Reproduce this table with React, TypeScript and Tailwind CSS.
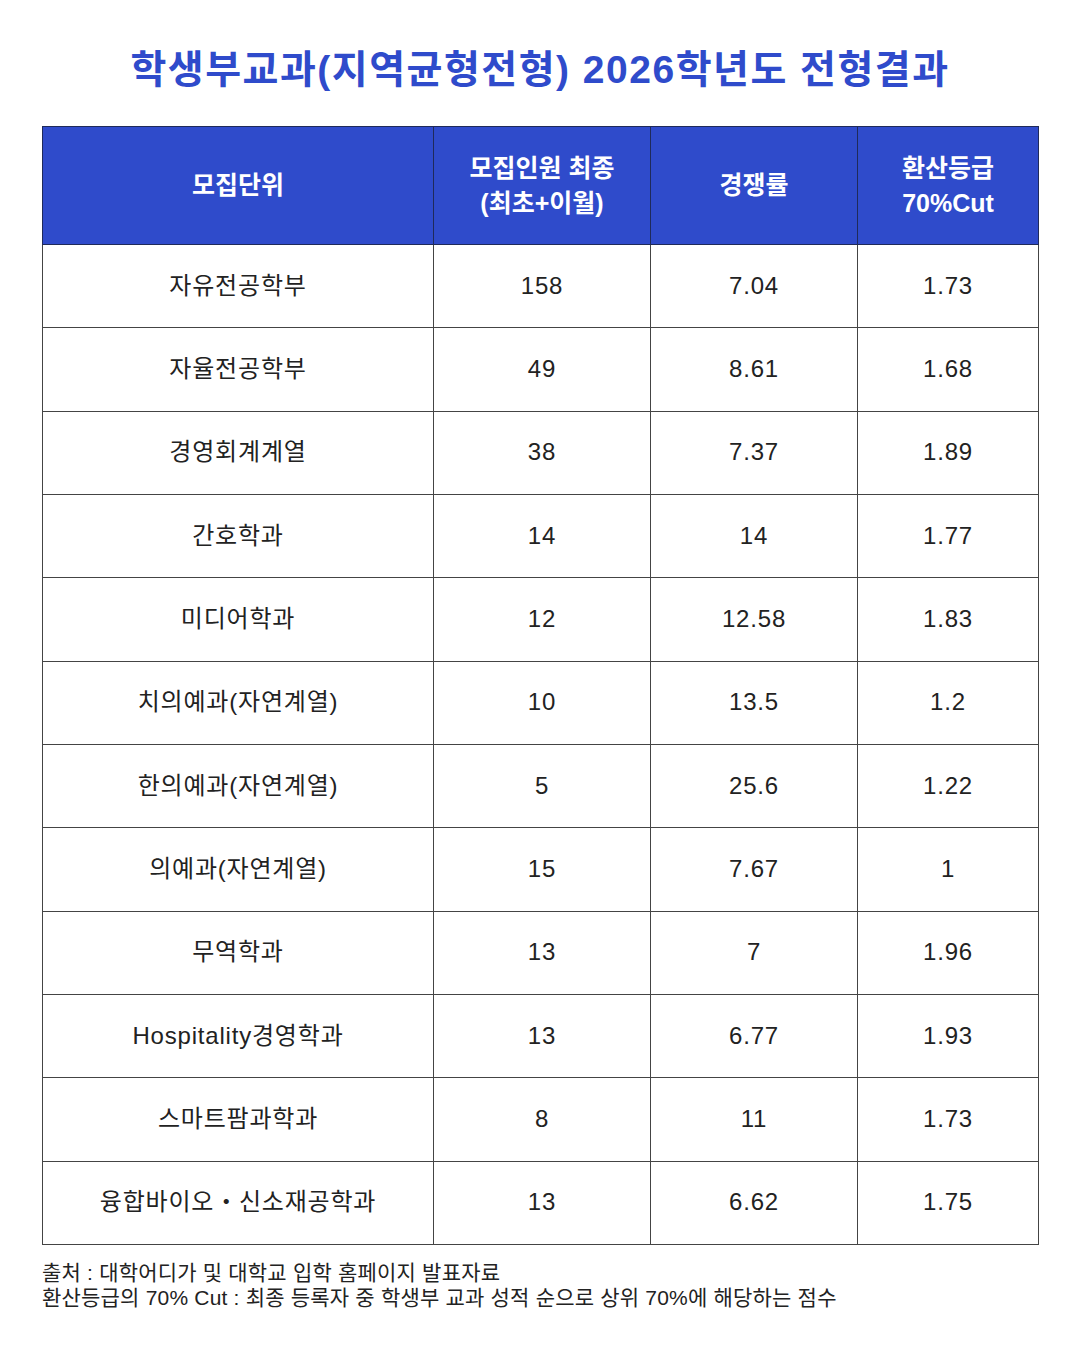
const rows: [string, string, string, string][] = [
  ["자유전공학부", "158", "7.04", "1.73"],
  ["자율전공학부", "49", "8.61", "1.68"],
  ["경영회계계열", "38", "7.37", "1.89"],
  ["간호학과", "14", "14", "1.77"],
  ["미디어학과", "12", "12.58", "1.83"],
  ["치의예과(자연계열)", "10", "13.5", "1.2"],
  ["한의예과(자연계열)", "5", "25.6", "1.22"],
  ["의예과(자연계열)", "15", "7.67", "1"],
  ["무역학과", "13", "7", "1.96"],
  ["Hospitality경영학과", "13", "6.77", "1.93"],
  ["스마트팜과학과", "8", "11", "1.73"],
  ["융합바이오・신소재공학과", "13", "6.62", "1.75"],
];

export default function App() {
  return (
    <div
      className="w-[1080px] h-[1350px] bg-white px-[42px] pt-[46px]"
      style={{ fontFamily: '"Liberation Sans", "Noto Sans CJK KR", sans-serif' }}
    >
      <h1 className="text-center text-[39px] font-bold leading-[48px] tracking-[1.5px] text-[#2f4bcb]">
        학생부교과(지역균형전형) 2026학년도 전형결과
      </h1>

      <table className="mt-[32px] w-[996px] table-fixed border-collapse text-center text-[#222]">
        <colgroup>
          <col className="w-[391px]" />
          <col className="w-[217px]" />
          <col className="w-[207px]" />
          <col className="w-[181px]" />
        </colgroup>
        <thead>
          <tr className="h-[118px] bg-[#2f4bcb] text-[25px] font-bold leading-[35px] text-white">
            <th className="border border-[#1f2a5a]">모집단위</th>
            <th className="border border-[#1f2a5a]">
              모집인원 최종
              <br />
              (최초+이월)
            </th>
            <th className="border border-[#1f2a5a]">경쟁률</th>
            <th className="border border-[#1f2a5a]">
              환산등급
              <br />
              70%Cut
            </th>
          </tr>
        </thead>
        <tbody className="text-[24px] tracking-[0.8px]">
          {rows.map((r) => (
            <tr key={r[0]} className="h-[83.33px]">
              {r.map((c, i) => (
                <td key={i} className="border border-[#444] pb-[1px]">
                  {c}
                </td>
              ))}
            </tr>
          ))}
        </tbody>
      </table>

      <div className="mt-[15px] text-[21px] leading-[25px] tracking-[0.2px] text-[#222]">
        <p>출처 : 대학어디가 및 대학교 입학 홈페이지 발표자료</p>
        <p>환산등급의 70% Cut : 최종 등록자 중 학생부 교과 성적 순으로 상위 70%에 해당하는 점수</p>
      </div>
    </div>
  );
}
